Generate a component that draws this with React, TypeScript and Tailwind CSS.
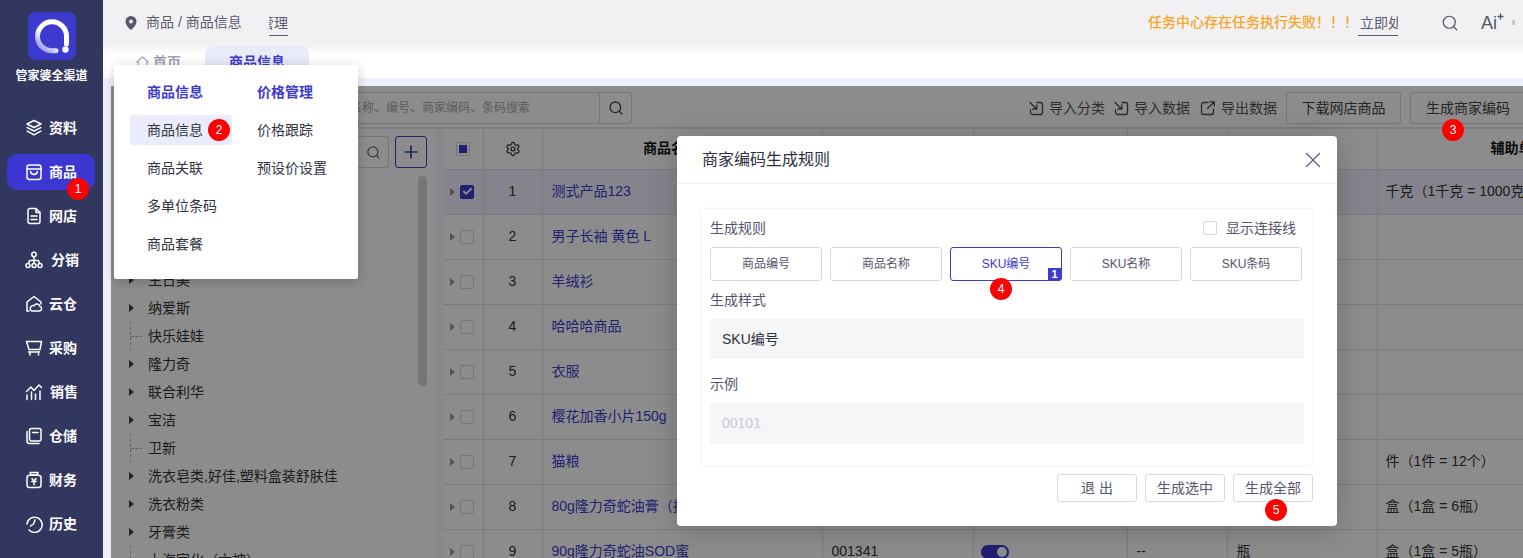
import React from "react";
import { Search, Settings, X, Plus, Check } from "lucide-react";

const S = (p: { children: React.ReactNode; size?: number; className?: string }) => (
  <svg width={p.size ?? 18} height={p.size ?? 18} viewBox="0 0 18 18" fill="none" stroke="currentColor" strokeWidth="1.5" strokeLinecap="round" strokeLinejoin="round" className={p.className}>
    {p.children}
  </svg>
);

const navIcons: Record<string, React.ReactNode> = {
  资料: <S><path d="M9 1.500 16 5 9 8.500 2 5Z" /><path d="M2.200 8.600 9 12l6.800-3.400" /><path d="M2.200 12.200 9 15.800l6.800-3.600" /></S>,
  商品: <S><rect x="2" y="2" width="14" height="14.500" rx="2.500" /><path d="M2 6h14" /><path d="M5.500 8.500c.6 2.200 2 3 3.500 3s2.900-.8 3.500-3" /></S>,
  网店: <S><path d="M3 3.500A2 2 0 0 1 5 1.500h6l4 4v9a2 2 0 0 1-2 2H5a2 2 0 0 1-2-2Z" /><path d="M11 1.500v4h4" /><path d="M6 9h6M6 12.500h6" /></S>,
  分销: <S><circle cx="9" cy="3.500" r="2.200" /><circle cx="3" cy="14.500" r="2" /><circle cx="9" cy="14.500" r="2" /><circle cx="15" cy="14.500" r="2" /><path d="M9 6v6.400M3.500 12.500 4.500 9.500h9l1 3" /></S>,
  云仓: <S><path d="M2 15.500V7l7-5.500L16 7v2" /><path d="M2 16h2" /><path d="M7 16h7.500a2.400 2.400 0 0 0 .3-4.700 3 3 0 0 0-5.700-.5A2.700 2.700 0 0 0 7 16Z" /></S>,
  采购: <S><path d="M1.500 2.500h15l-1.500 8H4Z" /><path d="M3.500 13h11" /><path d="M5 13v3M13.500 13v3" /></S>,
  销售: <S><path d="M1.500 8.500 6 4l3 3.500L14 2l2.500 2.500" /><path d="M2 12v4.500M6.500 9v7.500M10.500 11v5.500M15 8v8.500" /></S>,
  仓储: <S><rect x="4.500" y="1.500" width="11.500" height="12.500" rx="2" /><path d="M2 4.500V14a2.500 2.500 0 0 0 2.500 2.500H14" /><path d="M7.500 5.500h5.500" /></S>,
  财务: <S><path d="M5 1.500h8L12 4H6Z" /><rect x="2" y="4.200" width="14" height="12.300" rx="2.500" /><path d="M7 7.500 9 10l2-2.500M6.800 10.500h4.400M9 10v3.800" /></S>,
  历史: <S><path d="M4 15A7.600 7.600 0 1 0 2 9" /><path d="M10 5 8.500 9 5.500 11" /></S>,
};

const nav = ["资料", "商品", "网店", "分销", "云仓", "采购", "销售", "仓储", "财务", "历史"];

const Logo = () => (
  <svg width="48" height="48" viewBox="0 0 48 48" className="rounded-lg">
    <defs>
      <linearGradient id="g" x1="0.9" y1="0.1" x2="0.2" y2="0.9">
        <stop offset="0" stopColor="#ffffff" />
        <stop offset="0.65" stopColor="#ffffff" />
        <stop offset="1" stopColor="#a9a8ee" />
      </linearGradient>
    </defs>
    <rect width="48" height="48" fill="#3d3bcf" />
    <path d="M38.500 32V24A14.500 14.500 0 1 0 24 38.800h4" fill="none" stroke="url(#g)" strokeWidth="5" strokeLinecap="round" />
    <circle cx="37.500" cy="37.500" r="3.200" fill="#fff" />
  </svg>
);

const Badge = ({ n, cls }: { n: number; cls: string }) => (
  <div className={`absolute z-50 w-[22px] h-[22px] rounded-full bg-[#ff0000] text-white text-[12px] flex items-center justify-center ${cls}`}>{n}</div>
);

const Sidebar = () => (
  <aside className="w-[103px] h-full shrink-0 bg-[#32375f] flex flex-col items-center">
    <div className="mt-3"><Logo /></div>
    <div className="mt-2 text-white text-[12px] font-bold leading-4 h-[38px]">管家婆全渠道</div>
    <nav className="w-full flex flex-col">
      {nav.map((n) => (
        <div key={n} className="h-[44px] flex items-center pl-[7px]">
          <div className={`w-[88px] h-[36px] rounded-[10px] flex items-center pl-[18px] gap-[6px] text-white text-[14px] font-bold ${n === "商品" ? "bg-[#3b37d0]" : ""}`}>
            {navIcons[n]}
            <span className={n === "分销" ? "ml-[2px]" : n === "销售" ? "ml-[1px]" : ""}>{n}</span>
          </div>
        </div>
      ))}
    </nav>
  </aside>
);

const Header = () => (
  <header className="h-[45px] shrink-0 bg-[#f1f1f4] flex items-center text-[14px] text-[#5b5b70] pl-[21px] overflow-hidden">
    <svg width="14" height="16" viewBox="0 0 14 16" className="shrink-0"><path fillRule="evenodd" d="M7 1a5.500 5.500 0 0 0-5.500 5.500C1.500 10 5 13.500 7 15c2-1.500 5.500-5 5.500-8.500A5.500 5.500 0 0 0 7 1Zm0 3.500a2 2 0 1 1 0 4 2 2 0 0 1 0-4Z" fill="#54566a" /></svg>
    <span className="ml-[8px] w-[94px] shrink-0 whitespace-nowrap">商品 / 商品信息</span>
    <div className="ml-[29px] w-[19px] shrink-0 h-[24px] overflow-hidden flex justify-end items-center border-b border-[#5b5b70] whitespace-nowrap mt-[2px]"><span className="shrink-0">管理</span></div>
    <span className="ml-[860px] shrink-0 text-[#f9a31e] font-medium text-[14px] whitespace-nowrap w-[210px]">任务中心存在任务执行失败！！！</span>
    <div className="w-[40px] shrink-0 h-[24px] overflow-hidden flex items-center justify-start border-b border-[#5b5b70] whitespace-nowrap mt-[2px] pl-[2px]"><span className="shrink-0">立即处理</span></div>
    <Search size={18} className="ml-[43px] shrink-0 text-[#55566c]" strokeWidth={1.600} />
    <div className="ml-[22px] shrink-0 flex items-start text-[#55566c] text-[18px] leading-none w-[28px]">
      <span>Ai</span>
      <svg width="7" height="7" viewBox="0 0 7 7" className="mt-[-1px]" stroke="#55566c" strokeWidth="1.300"><path d="M3.500 .5v6M.5 3.500h6" /></svg>
    </div>
    <div className="ml-[3px] shrink-0 w-[3px] h-[5px] bg-[#c4c4cf] rounded-l-[1px]" />
  </header>
);

const Tabs = () => (
  <div className="h-[33px] shrink-0 bg-[linear-gradient(#f1f1f4,#ffffff_8px)] flex items-end pl-[32px] text-[14px] font-bold">
    <div className="h-[32px] w-[70px] flex items-center gap-[3px] text-[#a3a4b2]">
      <svg width="15" height="15" viewBox="0 0 16 16" fill="none" stroke="currentColor" strokeWidth="1.200"><path d="M1.500 8 8 2l6.500 6M3.500 7v7.500h9V7" /></svg>
      <span>首页</span>
    </div>
    <div className="h-[32px] w-[104px] rounded-t-lg bg-[#e9ebf9] text-[#3d3bcf] flex items-center justify-center">商品信息</div>
  </div>
);

const ImportIcon = ({ out }: { out?: boolean }) => (
  <svg width="16" height="16" viewBox="0 0 16 16" fill="none" stroke="#4b4b55" strokeWidth="1.300" strokeLinecap="round" strokeLinejoin="round" className="shrink-0">
    {out ? (
      <><path d="M8 2.500H3.500a2 2 0 0 0-2 2v8a2 2 0 0 0 2 2h8a2 2 0 0 0 2-2V9" /><path d="M7.500 8.500 14 2M10 1.800h4.200V6" /></>
    ) : (
      <><path d="M9 2.500h3.500a2 2 0 0 1 2 2v8a2 2 0 0 1-2 2h-8a2 2 0 0 1-2-2V10" /><path d="M2 2.500 8.500 9M8.800 5v4.200H4.500" /></>
    )}
  </svg>
);

const Toolbar = () => (
  <div className="h-[43px] shrink-0 bg-white border-b-2 border-[#e4e4e4] pt-[3px] flex items-center text-[14px] text-[#555] whitespace-nowrap">
    <div className="ml-[11px] w-[478px] shrink-0 h-[32px] border border-[#d5d5dd] rounded-l-[3px] flex items-center justify-end pr-[69px] text-[12px] text-[#a8a8a8]">请输入商品名称、编号、商家编码、条码搜索</div>
    <div className="w-[32px] h-[32px] border border-l-0 border-[#d5d5dd] rounded-r-[3px] flex items-center justify-center shrink-0"><Search size={16} className="text-[#444]" /></div>
    <div className="ml-[396px] flex items-center gap-[5px] shrink-0"><ImportIcon /><span>导入分类</span></div>
    <div className="ml-[8px] flex items-center gap-[5px] shrink-0"><ImportIcon /><span>导入数据</span></div>
    <div className="ml-[10px] flex items-center gap-[5px] shrink-0"><ImportIcon out /><span>导出数据</span></div>
    <div className="ml-[9px] w-[115px] h-[32px] shrink-0 border border-[#d5d5dd] rounded-[3px] flex items-center justify-center text-[#444]">下载网店商品</div>
    <div className="ml-[9px] w-[116px] h-[32px] shrink-0 border border-[#d5d5dd] rounded-[3px] flex items-center justify-center text-[#444]">生成商家编码</div>
  </div>
);

const tree: [string, boolean][] = [
  ["全部分类", true], ["服装", true], ["食品", true], ["生日美", true], ["纳爱斯", true], ["快乐娃娃", false], ["隆力奇", true],
  ["联合利华", true], ["宝洁", true], ["卫新", false], ["洗衣皂类,好佳,塑料盒装舒肤佳", true], ["洗衣粉类", true], ["牙膏类", true], ["上海家化（六神）", false],
];

const TreePanel = () => (
  <div className="w-[324px] shrink-0 bg-white flex flex-col">
    <div className="h-[39px] shrink-0 flex items-end gap-[6px] pl-[10px]">
      <div className="w-[268px] h-[32px] border border-[#d5d5dd] rounded-[3px] flex items-center justify-end pr-[7px]"><Search size={15} className="text-[#666]" /></div>
      <div className="w-[32px] h-[32px] border border-[#3d3bcf] rounded-[3px] flex items-center justify-center text-[#3d3bcf]"><Plus size={20} strokeWidth={2} /></div>
    </div>
    <div className="flex-1 flex min-h-0 overflow-hidden">
      <div className="flex-1 pt-[14px] pl-[18px] text-[14px] text-[#333]">
        {tree.map(([t, caret]) => (
          <div key={t} className="h-[28px] flex items-center whitespace-nowrap">
            <div className="w-[19px] h-full flex items-center relative shrink-0">
              {caret ? (
                <div className="w-0 h-0 border-y-[4px] border-y-transparent border-l-[5px] border-l-[#444]" />
              ) : (
                <div className="w-[12px] h-full ml-[1px] border-l border-dashed border-[#bbb] flex items-center"><div className="w-full border-t border-dashed border-[#bbb]" /></div>
              )}
            </div>
            <span>{t}</span>
          </div>
        ))}
      </div>
      <div className="w-[9px] mr-[8px] mt-[8px] h-[210px] rounded bg-[#d6d8df] shrink-0" />
    </div>
  </div>
);

const cols = [39, 59, 280, 151, 154, 100, 150, 283];
const rows: [string, string, string, string, string, string][] = [
  ["测式产品123", "", "", "", "", "千克（1千克 = 1000克）"],
  ["男子长袖 黄色 L", "", "", "", "", ""],
  ["羊绒衫", "", "", "", "", ""],
  ["哈哈哈商品", "", "", "", "", ""],
  ["衣服", "", "", "", "", ""],
  ["樱花加香小片150g", "", "", "", "", ""],
  ["猫粮", "", "", "", "", "件（1件 = 12个）"],
  ["80g隆力奇蛇油膏（抗裂）", "", "", "", "", "盒（1盒 = 6瓶）"],
  ["90g隆力奇蛇油SOD蜜", "001341", "on", "--", "瓶", "盒（1盒 = 5瓶）"],
];

const CB = ({ on }: { on?: boolean }) => (
  <div className={`w-[14px] h-[14px] rounded-[2px] border flex items-center justify-center shrink-0 ${on ? "bg-[#3d3bcf] border-[#3d3bcf]" : "bg-white border-[#d8d8dd]"}`}>
    {on && <Check size={11} strokeWidth={4} className="text-white" />}
  </div>
);

const cell = "border-r border-b border-[#e2e2e2] overflow-hidden whitespace-nowrap";

const DataTable = () => (
  <table className="table-fixed border-collapse text-[14px] text-[#333] bg-white shrink-0" style={{ width: cols.reduce((a, b) => a + b, 0) }}>
    <colgroup>{cols.map((c, i) => <col key={i} style={{ width: c }} />)}</colgroup>
    <thead>
      <tr className="h-[40px] bg-white text-[#111] font-bold">
        <th className={cell}>
          <div className="flex justify-center"><div className="w-[14px] h-[14px] rounded-[2px] border border-[#d8d8dd] flex items-center justify-center"><div className="w-[8px] h-[8px] bg-[#3d3bcf]" /></div></div>
        </th>
        <th className={cell}><div className="flex justify-center"><Settings size={16} strokeWidth={1.600} className="text-[#222]" /></div></th>
        <th className={`${cell} pr-[22px]`}>商品名称</th>
        <th className={cell}>商家编码</th>
        <th className={cell}>状态</th>
        <th className={cell}>规格</th>
        <th className={cell}>基本单位</th>
        <th className={cell}>辅助单位</th>
      </tr>
    </thead>
    <tbody>
      {rows.map((r, i) => (
        <tr key={i} className={`h-[45px] ${i === 0 ? "bg-[#f0f0ff]" : ""}`}>
          <td className={cell}>
            <div className="flex items-center pl-[6px] gap-[5px]">
              <div className="w-0 h-0 border-y-[4px] border-y-transparent border-l-[5px] border-l-[#999]" />
              <CB on={i === 0} />
            </div>
          </td>
          <td className={`${cell} text-center`}>{i + 1}</td>
          <td className={`${cell} pl-[9px] text-[#3d3bcf]`}>{r[0]}</td>
          <td className={`${cell} pl-[9px]`}>{r[1]}</td>
          <td className={`${cell} pl-[7px]`}>
            {r[2] === "on" && <div className="w-[28px] h-[14px] rounded-full bg-[#3d3bcf] flex justify-end items-center pr-[2px]"><div className="w-[10px] h-[10px] rounded-full bg-white" /></div>}
          </td>
          <td className={`${cell} pl-[9px]`}>{r[3]}</td>
          <td className={`${cell} pl-[9px]`}>{r[4]}</td>
          <td className={`${cell} pl-[8px]`}>{r[5]}</td>
        </tr>
      ))}
    </tbody>
  </table>
);

const ruleBtn = ["商品编号", "商品名称", "SKU编号", "SKU名称", "SKU条码"];

const Modal = () => (
  <div className="absolute z-30 left-[566px] top-[50px] w-[660px] h-[390px] bg-white rounded-[4px] shadow-[0_4px_30px_rgba(0,0,0,0.2)] flex flex-col text-[#55556c]">
    <div className="h-[48px] shrink-0 border-b border-[#eeeef0] flex items-center justify-between pl-[25px] pr-[11px]">
      <span className="text-[16px] text-[#2f2f3d]">商家编码生成规则</span>
      <X size={26} strokeWidth={1.200} className="text-[#5e5e78]" />
    </div>
    <div className="mt-[25px] mx-[25px] h-[256px] shadow-[0_0_4px_rgba(0,0,0,0.08)] px-[8px] text-[14px] flex flex-col">
      <div className="h-[38px] shrink-0 flex items-center justify-between pr-[8px]">
        <span>生成规则</span>
        <div className="flex items-center gap-[9px]">
          <div className="w-[14px] h-[14px] border border-[#d8d8e0] rounded-[2px]" />
          <span>显示连接线</span>
        </div>
      </div>
      <div className="flex gap-[8px] shrink-0">
        {ruleBtn.map((b) => (
          <div key={b} className={`relative w-[112px] h-[34px] rounded-[3px] border flex items-center justify-center text-[12px] ${b === "SKU编号" ? "border-[#3d3bcf] text-[#3d3bcf]" : "border-[#d8d8e0]"}`}>
            {b}
            {b === "SKU编号" && <span className="absolute right-0 bottom-0 w-[13px] h-[12px] bg-[#3d3bcf] text-white text-[11px] font-bold leading-[12px] text-center">1</span>}
          </div>
        ))}
      </div>
      <div className="mt-[5px] mb-[5px] h-[28px] shrink-0 flex items-center">生成样式</div>
      <div className="w-[594px] h-[40px] shrink-0 rounded-[3px] bg-[#f6f6f8] flex items-center px-[12px] text-[#2f2f3d]">SKU编号</div>
      <div className="mt-[10px] mb-[4px] h-[30px] shrink-0 flex items-center">示例</div>
      <div className="w-[594px] h-[41px] shrink-0 rounded-[3px] bg-[#f6f6f8] flex items-center px-[12px] text-[#c8c8d4]">00101</div>
    </div>
    <div className="mt-[9px] pr-[24px] flex justify-end gap-[8px] text-[14px]">
      {["退 出", "生成选中", "生成全部"].map((b) => (
        <div key={b} className="w-[80px] h-[28px] rounded-[3px] border border-[#d8d8e0] flex items-center justify-center">{b}</div>
      ))}
    </div>
  </div>
);

const Menu = () => (
  <div className="absolute z-40 left-[114px] top-[65px] w-[244px] h-[214px] bg-white rounded-[2px] shadow-[0_2px_12px_rgba(0,0,0,0.2)] pl-[16px] pt-[15px] flex text-[14px] text-[#33333f]">
    <div className="w-[127px] flex flex-col">
      <div className="h-[24px] pl-[17px] flex items-center font-bold text-[#3d3bcf]">商品信息</div>
      <div className="mt-[11px] w-[102px] h-[30px] pl-[17px] flex items-center rounded-[3px] bg-[#eaecfb]">商品信息</div>
      <div className="mt-[8px] h-[30px] pl-[17px] flex items-center">商品关联</div>
      <div className="mt-[8px] h-[30px] pl-[17px] flex items-center">多单位条码</div>
      <div className="mt-[8px] h-[30px] pl-[17px] flex items-center">商品套餐</div>
    </div>
    <div className="flex flex-col">
      <div className="h-[24px] flex items-center font-bold text-[#3d3bcf]">价格管理</div>
      <div className="mt-[11px] h-[30px] flex items-center">价格跟踪</div>
      <div className="mt-[8px] h-[30px] flex items-center">预设价设置</div>
    </div>
  </div>
);

export default function App() {
  return (
    <div className="relative w-[1523px] h-[558px] overflow-hidden flex bg-white" style={{ fontFamily: '"Liberation Sans", "Noto Sans CJK SC", sans-serif' }}>
      <Sidebar />
      <div className="flex-1 min-w-0 flex flex-col">
        <Header />
        <Tabs />
        <div className="flex-1 min-h-0 bg-[#eef0fd] pl-[8px] pt-[8px]">
          <div className="relative h-full overflow-hidden flex flex-col">
            <Toolbar />
            <div className="flex-1 min-h-0 flex bg-[#f6f7ff]">
              <TreePanel />
              <div className="ml-[9px]"><DataTable /></div>
            </div>
            <div className="absolute inset-0 z-20 bg-black/45" />
            <Modal />
          </div>
        </div>
      </div>
      <Menu />
      <Badge n={1} cls="left-[67px] top-[178px]" />
      <Badge n={2} cls="left-[208px] top-[119px]" />
      <Badge n={3} cls="left-[1442px] top-[119px]" />
      <Badge n={4} cls="left-[990px] top-[278px]" />
      <Badge n={5} cls="left-[1265px] top-[499px]" />
    </div>
  );
}
